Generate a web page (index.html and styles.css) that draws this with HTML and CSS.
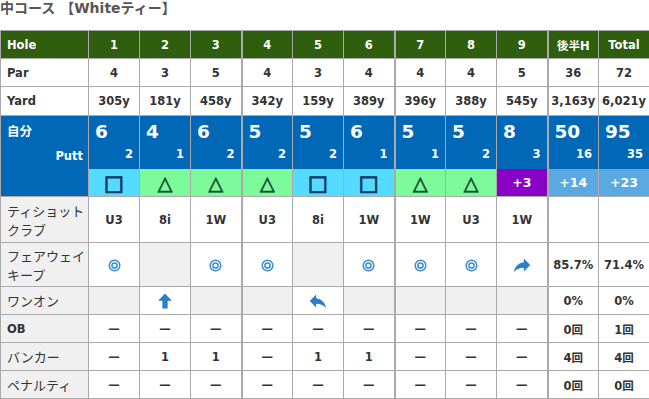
FILE: index.html
```html
<!DOCTYPE html>
<html lang="ja">
<head>
<meta charset="utf-8">
<title>Score</title>
<link rel="stylesheet" href="styles.css">
</head>
<body>
<h2 class="title">中コース 【Whiteティー】</h2>
<table class="score">
  <colgroup><col class="c-label"><col span="11" class="c-hole"></colgroup>
  <tr class="r-head">
    <th class="lbl">Hole</th><th>1</th><th>2</th><th>3</th><th class="sep">4</th><th>5</th><th>6</th><th class="sep">7</th><th>8</th><th>9</th><th class="sep">後半H</th><th>Total</th>
  </tr>
  <tr class="r-std">
    <td class="lbl white">Par</td><td>4</td><td>3</td><td>5</td><td class="sep">4</td><td>3</td><td>4</td><td class="sep">4</td><td>4</td><td>5</td><td class="sep">36</td><td>72</td>
  </tr>
  <tr class="r-yard">
    <td class="lbl white">Yard</td><td>305y</td><td>181y</td><td>458y</td><td class="sep">342y</td><td>159y</td><td>389y</td><td class="sep">396y</td><td>388y</td><td>545y</td><td class="sep">3,163y</td><td>6,021y</td>
  </tr>
  <tr class="r-score">
    <td class="me" rowspan="2"><div class="me-in"><span class="me-name">自分</span><span class="me-putt">Putt</span></div></td>
    <td class="sc"><div class="sc-in"><span class="strokes">6</span><span class="putt">2</span></div></td>
    <td class="sc"><div class="sc-in"><span class="strokes">4</span><span class="putt">1</span></div></td>
    <td class="sc"><div class="sc-in"><span class="strokes">6</span><span class="putt">2</span></div></td>
    <td class="sc sep"><div class="sc-in"><span class="strokes">5</span><span class="putt">2</span></div></td>
    <td class="sc"><div class="sc-in"><span class="strokes">5</span><span class="putt">2</span></div></td>
    <td class="sc"><div class="sc-in"><span class="strokes">6</span><span class="putt">1</span></div></td>
    <td class="sc sep"><div class="sc-in"><span class="strokes">5</span><span class="putt">1</span></div></td>
    <td class="sc"><div class="sc-in"><span class="strokes">5</span><span class="putt">2</span></div></td>
    <td class="sc"><div class="sc-in"><span class="strokes">8</span><span class="putt">3</span></div></td>
    <td class="sc sep"><div class="sc-in"><span class="strokes">50</span><span class="putt">16</span></div></td>
    <td class="sc"><div class="sc-in"><span class="strokes">95</span><span class="putt">35</span></div></td>
  </tr>
  <tr class="r-mark">
    <td class="bogey"><span class="sq">□</span></td>
    <td class="par"><span class="tri">△</span></td>
    <td class="par"><span class="tri">△</span></td>
    <td class="par sep"><span class="tri">△</span></td>
    <td class="bogey"><span class="sq">□</span></td>
    <td class="bogey"><span class="sq">□</span></td>
    <td class="par sep"><span class="tri">△</span></td>
    <td class="par"><span class="tri">△</span></td>
    <td class="triple">+3</td>
    <td class="over sep">+14</td>
    <td class="over">+23</td>
  </tr>
  <tr class="r-tee">
    <td class="lbl jp">ティショット<br>クラブ</td><td>U3</td><td>8i</td><td>1W</td><td class="sep">U3</td><td>8i</td><td>1W</td><td class="sep">1W</td><td>U3</td><td>1W</td><td class="sep"></td><td></td>
  </tr>
  <tr class="r-fw">
    <td class="lbl jp">フェアウェイ<br>キープ</td>
    <td><svg class="dc" viewBox="0 0 12 12"><circle cx="6" cy="6" r="4.9"/><circle cx="6" cy="6" r="2.4"/></svg></td>
    <td class="na"></td>
    <td><svg class="dc" viewBox="0 0 12 12"><circle cx="6" cy="6" r="4.9"/><circle cx="6" cy="6" r="2.4"/></svg></td>
    <td class="sep"><svg class="dc" viewBox="0 0 12 12"><circle cx="6" cy="6" r="4.9"/><circle cx="6" cy="6" r="2.4"/></svg></td>
    <td class="na"></td>
    <td><svg class="dc" viewBox="0 0 12 12"><circle cx="6" cy="6" r="4.9"/><circle cx="6" cy="6" r="2.4"/></svg></td>
    <td class="sep"><svg class="dc" viewBox="0 0 12 12"><circle cx="6" cy="6" r="4.9"/><circle cx="6" cy="6" r="2.4"/></svg></td>
    <td><svg class="dc" viewBox="0 0 12 12"><circle cx="6" cy="6" r="4.9"/><circle cx="6" cy="6" r="2.4"/></svg></td>
    <td><svg class="arrow" viewBox="0 0 24 24"><path d="M14 9V5l7 7-7 7v-4.1c-5 0-8.5 1.6-11 5.1 1-5 4-10 11-11z"/></svg></td>
    <td class="sep">85.7%</td><td>71.4%</td>
  </tr>
  <tr class="r-std">
    <td class="lbl jp">ワンオン</td>
    <td class="na"></td>
    <td><svg class="arrow up" viewBox="0 0 24 24"><path d="M12 2l9 9.5h-5.5V22h-7V11.5H3z"/></svg></td>
    <td class="na"></td>
    <td class="na sep"></td>
    <td><svg class="arrow" viewBox="0 0 24 24"><path d="M10 9V5l-7 7 7 7v-4.1c5 0 8.5 1.6 11 5.1-1-5-4-10-11-11z"/></svg></td>
    <td class="na"></td>
    <td class="na sep"></td>
    <td class="na"></td>
    <td class="na"></td>
    <td class="sep">0%</td><td>0%</td>
  </tr>
  <tr class="r-std">
    <td class="lbl">OB</td><td>—</td><td>—</td><td>—</td><td class="sep">—</td><td>—</td><td>—</td><td class="sep">—</td><td>—</td><td>—</td><td class="sep">0回</td><td>1回</td>
  </tr>
  <tr class="r-std">
    <td class="lbl jp">バンカー</td><td>—</td><td>1</td><td>1</td><td class="sep">—</td><td>1</td><td>1</td><td class="sep">—</td><td>—</td><td>—</td><td class="sep">4回</td><td>4回</td>
  </tr>
  <tr class="r-std">
    <td class="lbl jp">ペナルティ</td><td>—</td><td>—</td><td>—</td><td class="sep">—</td><td>—</td><td>—</td><td class="sep">—</td><td>—</td><td>—</td><td class="sep">0回</td><td>0回</td>
  </tr>
</table>
</body>
</html>
```
FILE: styles.css
```css
html, body {
  margin: 0;
  padding: 0;
  background: #fff;
}
body {
  font-family: "DejaVu Sans", "Noto Sans CJK JP", sans-serif;
  font-size: 11.5px;
  font-weight: bold;
  color: #333;
}
.title {
  margin: 0;
  height: 30px;
  font-size: 14px;
  line-height: 17px;
  color: #555;
  font-weight: bold;
}
.score {
  border-collapse: collapse;
  table-layout: fixed;
  width: 650px;
}
.c-label { width: 88px; }
.c-hole { width: 51px; }
.score th,
.score td {
  border: 1px solid #aaa;
  padding: 0;
  text-align: center;
  vertical-align: middle;
  white-space: nowrap;
}
.score .sep {
  border-left: 2px solid #aaa;
}
.r-head th {
  background: #2e5e0e;
  color: #fff;
  height: 27px;
}
.r-std td { height: 27px; }
.r-yard td { height: 28px; }
.r-tee td { height: 45px; }
.r-fw td { height: 43px; }
.score .lbl {
  text-align: left;
  padding-left: 6px;
  background: #f0f0f0;
}
.score th.lbl { background: #2e5e0e; }
.score .lbl.white { background: #fff; }
.score .lbl.jp {
  font-weight: normal;
  font-family: "Noto Sans CJK JP", sans-serif;
  font-size: 13px;
  line-height: 19px;
  color: #333;
}
.score .na { background: #f0f0f0; }

/* own score block */
.score .me {
  background: #0068b7;
  color: #fff;
  vertical-align: top;
  text-align: left;
}
.me-in {
  display: flex;
  flex-direction: column;
  padding: 7px 5px 0 6px;
}
.me-name {
  font-family: "Noto Sans CJK JP", sans-serif;
  font-size: 12.5px;
  line-height: 16px;
}
.me-putt {
  align-self: flex-end;
  margin-top: 10px;
  font-size: 11.5px;
}
.score .sc {
  background: #0068b7;
  color: #fff;
  height: 53px;
  vertical-align: top;
  border-bottom: none;
}
.sc-in {
  display: flex;
  flex-direction: column;
  height: 53px;
}
.strokes {
  font-size: 18.5px;
  line-height: 22px;
  text-align: left;
  padding: 5px 0 0 6px;
}
.putt {
  text-align: right;
  padding: 3px 6px 0 0;
  font-size: 11.5px;
  line-height: 16px;
}
.r-mark td {
  height: 27px;
  border-top: none;
  color: #fff;
  font-size: 12.5px;
}
.score .bogey { background: #55dbff; }
.score .par { background: #7dfb9b; }
.score .triple { background: #8a00c4; }
.score .over { background: #5aa9e2; }
.sq {
  color: #0f3b63;
  font-size: 21px;
  line-height: 22px;
  -webkit-text-stroke: 1px #0f3b63;
}
.tri {
  color: #174d35;
  font-size: 19px;
  line-height: 22px;
  -webkit-text-stroke: 0.7px #174d35;
}
.dc {
  width: 13px;
  height: 13px;
  display: inline-block;
  vertical-align: middle;
}
.dc circle {
  fill: none;
  stroke: #3a8dd0;
  stroke-width: 1.4;
}
.arrow {
  width: 22px;
  height: 22px;
  display: inline-block;
  vertical-align: middle;
  fill: #2a7fc6;
}
.arrow.up {
  width: 18px;
  height: 18px;
}
```
